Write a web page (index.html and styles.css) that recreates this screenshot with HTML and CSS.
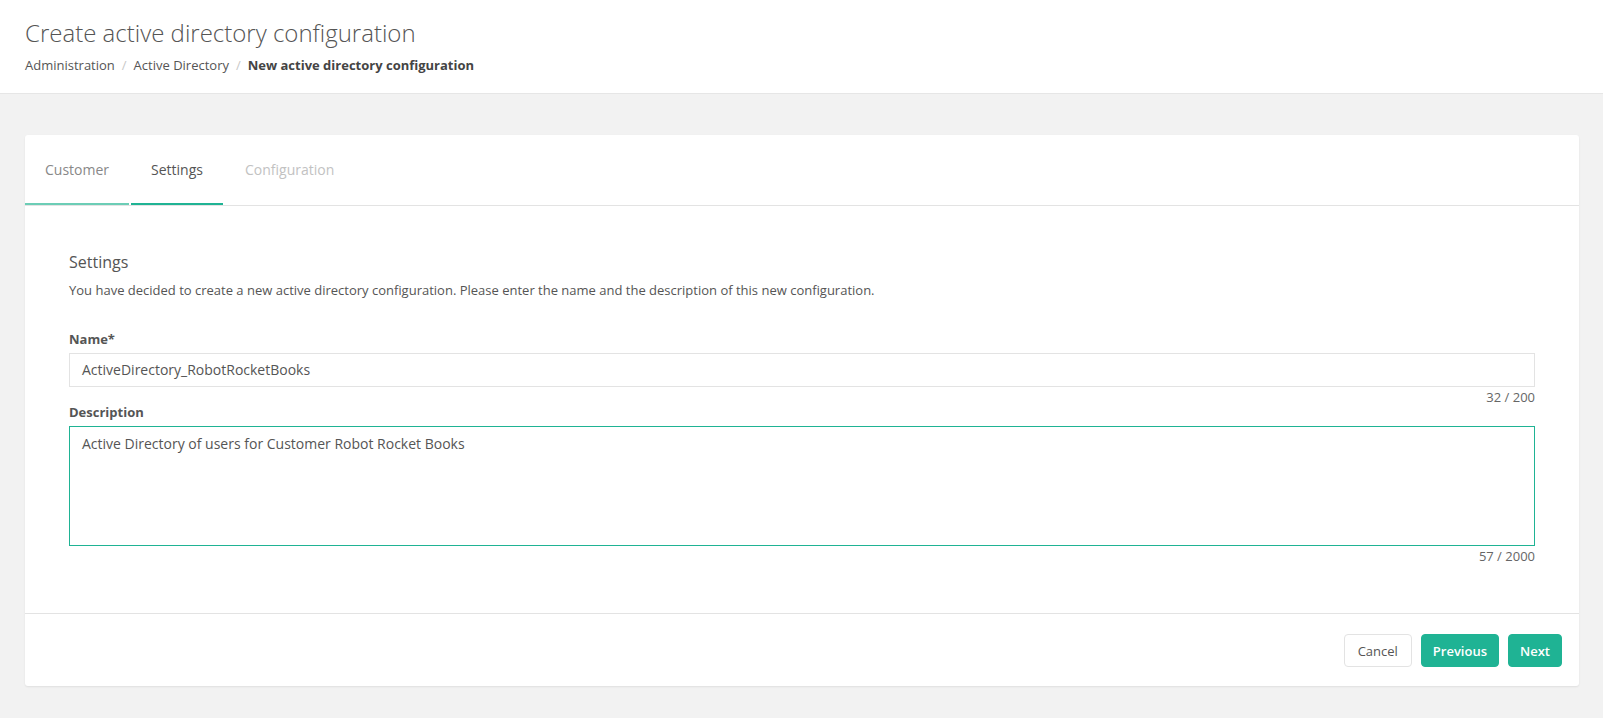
FILE: index.html
```html
<!DOCTYPE html>
<html lang="en">
<head>
<meta charset="utf-8">
<title>Create active directory configuration</title>
<link rel="stylesheet" href="styles.css">
</head>
<body>
<header class="page-header">
  <h1 class="page-title">Create active directory configuration</h1>
  <nav class="breadcrumb">
    <span class="crumb">Administration</span>
    <span class="sep">/</span>
    <span class="crumb">Active Directory</span>
    <span class="sep">/</span>
    <span class="crumb current">New active directory configuration</span>
  </nav>
</header>
<main class="content">
  <section class="card">
    <div class="tabs">
      <div class="tab done">Customer</div>
      <div class="tab active">Settings</div>
      <div class="tab disabled">Configuration</div>
    </div>
    <div class="card-body">
      <h2 class="section-title">Settings</h2>
      <p class="section-desc">You have decided to create a new active directory configuration. Please enter the name and the description of this new configuration.</p>
      <div class="field">
        <label class="field-label">Name*</label>
        <div class="input">ActiveDirectory_RobotRocketBooks</div>
        <div class="counter">32 / 200</div>
      </div>
      <div class="field">
        <label class="field-label">Description</label>
        <div class="textarea">Active Directory of users for Customer Robot Rocket Books</div>
        <div class="counter">57 / 2000</div>
      </div>
    </div>
    <div class="card-footer">
      <button class="btn btn-default">Cancel</button>
      <button class="btn btn-primary">Previous</button>
      <button class="btn btn-primary">Next</button>
    </div>
  </section>
</main>
</body>
</html>
```

FILE: styles.css
```css
* { box-sizing: border-box; }
html, body { margin: 0; padding: 0; }
body {
  background: #f2f2f2;
  font-family: "Open Sans", "Noto Sans", sans-serif;
  color: #555;
  height: 718px;
  overflow: hidden;
}
.page-header {
  background: #fff;
  border-bottom: 1px solid #e6e6e6;
  padding: 18px 25px 0;
  height: 94px;
}
.page-title {
  margin: 0;
  font-size: 24px;
  line-height: 30px;
  font-weight: 300;
  color: #555;
}
.breadcrumb {
  margin-top: 8px;
  font-size: 13px;
  line-height: 18px;
  color: #555;
  display: flex;
  gap: 7px;
}
.breadcrumb .sep { color: #c8c8c8; }
.breadcrumb .current { font-weight: 700; color: #444; }
.content {
  padding: 41px 24px 0 25px;
}
.card {
  background: #fff;
  border-radius: 3px;
  box-shadow: 0 1px 2px rgba(0,0,0,0.08);
}
.tabs {
  display: flex;
  gap: 2px;
  border-bottom: 1px solid #e3e3e3;
}
.tab {
  padding: 0 20px;
  height: 70px;
  line-height: 70px;
  font-size: 14px;
  border-bottom: 2px solid transparent;
}
.tab.done { color: #888; border-bottom-color: #6ccdb6; }
.tab.active { color: #555; border-bottom-color: #1fb394; }
.tab.disabled { color: #c2c2c2; }
.card-body {
  padding: 45px 44px 50px;
}
.section-title {
  margin: 0;
  font-size: 16px;
  line-height: 22px;
  font-weight: 400;
  color: #555;
}
.section-desc {
  margin: 7px 0 31px;
  font-size: 13px;
  line-height: 20px;
  color: #555;
}
.field-label {
  display: block;
  font-size: 13px;
  line-height: 16px;
  font-weight: 700;
  color: #555;
  margin-bottom: 6px;
}
.input {
  height: 34px;
  border: 1px solid #e3e3e3;
  padding: 0 12px;
  font-size: 14px;
  line-height: 32px;
  color: #555;
}
.textarea {
  height: 120px;
  border: 1px solid #1fb394;
  padding: 7px 12px;
  font-size: 14px;
  line-height: 20px;
  color: #555;
}
.counter {
  margin-top: 3px;
  text-align: right;
  font-size: 13px;
  line-height: 14px;
  color: #666;
}
.card-footer {
  border-top: 1px solid #e3e3e3;
  padding: 20px 17px 19px;
  display: flex;
  justify-content: flex-end;
  gap: 9px;
}
.btn {
  height: 33px;
  padding: 0 11px;
  font-family: inherit;
  font-size: 13px;
  border-radius: 4px;
  cursor: pointer;
}
.btn-default {
  background: #fff;
  border: 1px solid #e3e3e3;
  color: #555;
  padding: 0 13px;
}
.btn-primary {
  background: #1fb394;
  border: 1px solid #1fb394;
  color: #fff;
  font-weight: 600;
}
```
